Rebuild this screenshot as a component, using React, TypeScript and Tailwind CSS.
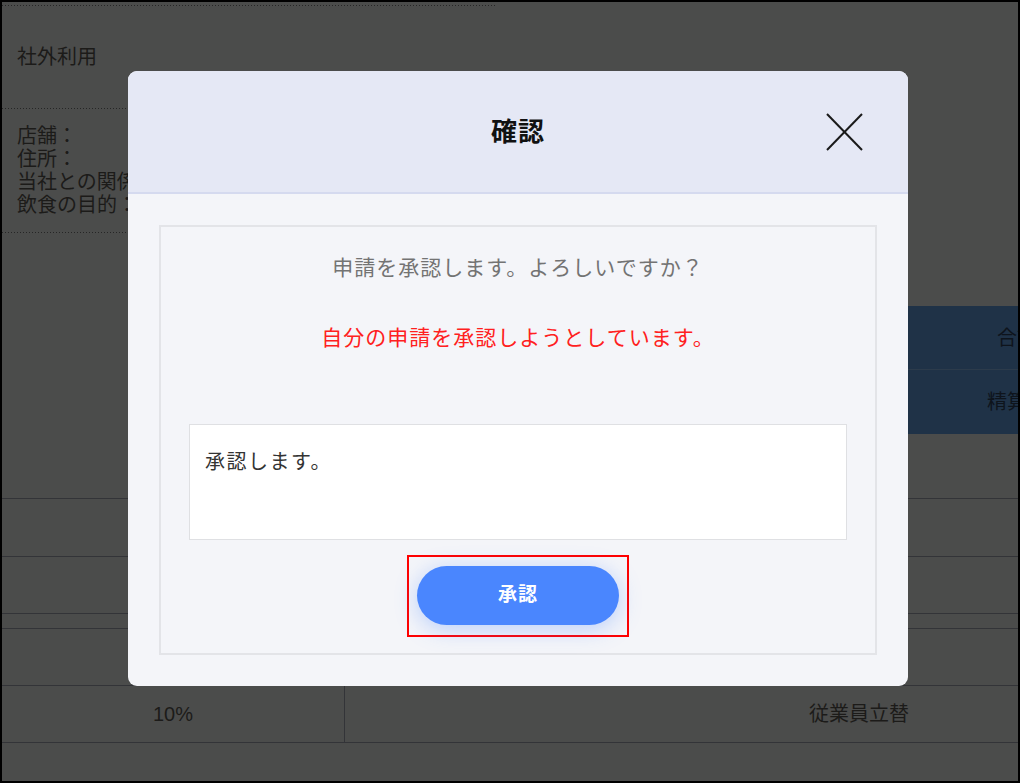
import React from "react";

function Dotted() {
  return (
    <div className="h-px w-[493px] bg-[linear-gradient(to_right,#262626_1px,transparent_1px)] bg-[length:3px_1px]" />
  );
}

export default function App() {
  return (
    <div className="relative w-[1020px] h-[783px] overflow-hidden border-2 border-black bg-[#4b4c4b] font-['Liberation_Sans','Noto_Sans_CJK_JP',sans-serif] text-[#1c1b19] flex flex-col">
      {/* background page */}
      <div className="mt-[3px]">
        <Dotted />
      </div>
      <div className="h-[102px] flex items-center pl-[15px] text-[20px] leading-[23px]">
        社外利用
      </div>
      <Dotted />
      <div className="h-[123px] flex flex-col justify-center pl-[15px] text-[20px] leading-[23px]">
        <div>店舗：</div>
        <div>住所：</div>
        <div>当社との関係：</div>
        <div>飲食の目的：</div>
      </div>
      <Dotted />
      <div className="mt-[73px] ml-auto w-[510px] h-[128px] bg-[#1f3247] flex flex-col text-[20px] text-[#0e141c]">
        <div className="h-[64px] border-b border-[#2c3b4b] flex items-center pl-[489px] whitespace-nowrap overflow-hidden">
          合計
        </div>
        <div className="flex-1 flex items-center pl-[479px] whitespace-nowrap overflow-hidden">
          精算
        </div>
      </div>
      <div className="mt-[64px] flex flex-col flex-1">
        <div className="h-[58px] border-t border-[#333438]" />
        <div className="h-[57px] border-t border-[#333438]" />
        <div className="h-[15px] border-t border-[#333438]" />
        <div className="h-[57px] border-t border-[#333438]" />
        <div className="h-[57px] border-t border-[#333438] flex text-[20px]">
          <div className="w-[343px] border-r border-[#333438] flex items-center justify-center">
            10%
          </div>
          <div className="flex-1 flex items-center justify-end pr-[109px]">
            従業員立替
          </div>
        </div>
        <div className="flex-1 border-t border-[#333438]" />
      </div>

      {/* modal */}
      <div className="absolute left-[126px] top-[69px] w-[780px] h-[615px] rounded-[9px] overflow-hidden bg-[#f4f5f9] flex flex-col">
        <div className="relative h-[123px] shrink-0 border-b-2 border-[#d5daef] bg-[#e5e8f5] flex items-center justify-center">
          <div className="text-[26px] font-bold text-[#111] leading-none tracking-[1px]">確認</div>
          <svg
            className="absolute right-[45px] top-[42px]"
            width="37"
            height="38"
            viewBox="0 0 37 38"
            fill="none"
            stroke="#1a1a1a"
            strokeWidth="2"
          >
            <line x1="1" y1="1" x2="36" y2="37" />
            <line x1="36" y1="1" x2="1" y2="37" />
          </svg>
        </div>
        <div className="flex-1 p-[31px]">
          <div className="h-full border-2 border-[#e3e4e8] flex flex-col items-center">
            <div className="mt-[27px] text-[21px] leading-[28px] tracking-[1px] text-[#737373]">
              申請を承認します。よろしいですか？
            </div>
            <div className="mt-[42px] text-[21px] leading-[28px] tracking-[1px] text-[#ff2020]">
              自分の申請を承認しようとしています。
            </div>
            <textarea
              readOnly
              defaultValue="承認します。"
              className="mt-[72px] w-[658px] h-[116px] shrink-0 resize-none bg-white border border-[#dfe0e3] pt-[23px] pl-[15px] text-[20px] leading-[28px] tracking-[1.5px] text-[#333] outline-none font-['Liberation_Sans','Noto_Sans_CJK_JP',sans-serif]"
            />
            <div className="mt-[15px] border-2 border-[#ff0000] pt-[9px] pb-[10px] px-[8px]">
              <button className="w-[202px] h-[59px] rounded-full bg-[#4a86fe] text-white text-[19px] font-semibold tracking-[1px] shadow-[0_4px_22px_rgba(74,134,254,0.35)]">
                承認
              </button>
            </div>
          </div>
        </div>
      </div>
    </div>
  );
}
